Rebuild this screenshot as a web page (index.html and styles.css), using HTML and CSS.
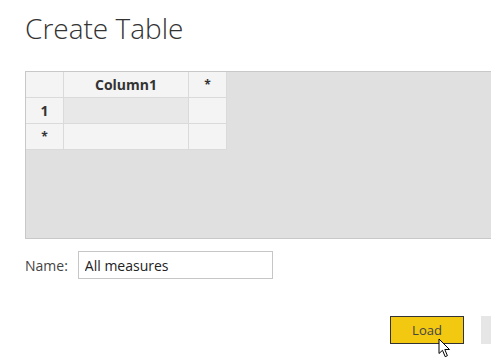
FILE: index.html
```html
<!DOCTYPE html>
<html lang="en">
<head>
    <meta charset="UTF-8">
    <title>Create Table</title>
    <link rel="stylesheet" href="styles.css">
</head>
<body>
    <div class="dialog">
        <h1 class="title">Create Table</h1>

        <!-- Data entry grid -->
        <div class="grid-panel">
            <table class="grid">
                <tr>
                    <th class="corner"></th>
                    <th class="col-head">Column1</th>
                    <th class="add-col">*</th>
                </tr>
                <tr>
                    <td class="row-head">1</td>
                    <td class="cell selected"></td>
                    <td class="cell"></td>
                </tr>
                <tr>
                    <td class="row-head star">*</td>
                    <td class="cell"></td>
                    <td class="cell"></td>
                </tr>
            </table>
        </div>

        <div class="name-row">
            <label for="table-name">Name:</label>
            <input type="text" id="table-name" value="All measures">
        </div>

        <div class="actions">
            <div class="load-wrap">
                <button class="load-btn">Load</button>
                <svg class="cursor" width="14" height="21" viewBox="0 0 14 21">
                    <path d="M1 1 L1 15.5 L4.5 12.3 L7.2 18.7 L9.4 17.7 L6.8 11.5 L11.5 11.5 Z" fill="#fff" stroke="#000" stroke-width="1"/>
                </svg>
            </div>
            <button class="cancel-btn"></button>
        </div>
    </div>
</body>
</html>
```

FILE: styles.css
```css
/* Basic styling */
html, body {
    height: 100%;
}
body {
    margin: 0;
    background-color: #ffffff;
    font-family: 'Segoe UI', 'Open Sans', sans-serif;
    color: #333;
    overflow-x: hidden;
}
.dialog {
    padding: 8px 0 0 25px;
    min-height: 355px;
}
.title {
    margin: 0 0 23px 0;
    font-weight: 300;
    font-size: 28px;
    line-height: 40px;
    color: #333;
}
.grid-panel {
    height: 166px;
    background-color: #e0e0e0;
    border-top: 1px solid #c8c8c8;
    border-bottom: 1px solid #c8c8c8;
    border-left: 1px solid #c8c8c8;
}
.grid {
    border-collapse: collapse;
    margin: 0;
}
.grid th, .grid td {
    background-color: #f4f4f4;
    border: 1px solid #dadada;
    height: 25px;
    padding: 0;
    text-align: center;
    font-size: 14px;
    font-weight: 700;
    color: #333;
}
.grid .corner {
    width: 37px;
    border-top: none;
    border-left: none;
}
.grid .col-head {
    width: 124px;
    border-top: none;
}
.grid .add-col {
    width: 37px;
    font-size: 12px;
    border-top: none;
}
.grid .row-head {
    border-left: none;
}
.grid .star {
    font-size: 12px;
}
.grid .cell.selected {
    background-color: #e8e8e8;
}
.name-row {
    display: flex;
    align-items: center;
    gap: 10px;
    margin-top: 12px;
}
.name-row label {
    font-size: 14px;
    color: #444;
}
.name-row input {
    width: 181px;
    height: 26px;
    padding: 0 6px;
    border: 1px solid #c6c6c6;
    font-family: inherit;
    font-size: 14px;
    color: #222;
    margin: 0;
}
.actions {
    display: flex;
    justify-content: flex-end;
    gap: 17px;
    margin-top: 37px;
}
.load-wrap {
    position: relative;
    height: 28px;
}
.load-btn {
    width: 74px;
    height: 28px;
    background-color: #f2c811;
    border: 1px solid #333;
    font-family: inherit;
    font-size: 13px;
    color: #444;
    padding: 0;
}
.cursor {
    position: absolute;
    left: 48px;
    top: 22px;
    z-index: 2;
}
.cancel-btn {
    width: 10px;
    height: 28px;
    background-color: #e6e6e6;
    border: none;
    padding: 0;
}
```
